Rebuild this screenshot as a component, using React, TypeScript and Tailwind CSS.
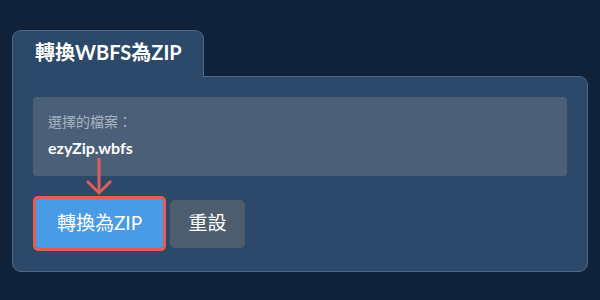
import React from "react";

export default function App() {
  return (
    <div
      className="w-[600px] h-[300px] bg-[#10213a] pt-[30px] px-[12px]"
      style={{ fontFamily: "Lato, 'Noto Sans CJK TC', sans-serif" }}
    >
      <div className="relative z-10 -mb-px w-[192px] h-[47px] bg-[#2c4969] border border-b-0 border-[#4e6b8c] rounded-t-[9px] pl-[22px] pt-[9px]">
        <span className="text-[20px] font-bold text-white leading-[24px]">轉換WBFS為ZIP</span>
      </div>
      <div className="bg-[#2c4969] border border-[#4e6b8c] rounded-[9px] rounded-tl-none px-[20px] pt-[20px] pb-[20px]">
        <div className="h-[79px] bg-[#4b5f78] rounded-[4px] pl-[15px] pt-[17px]">
          <div className="text-[14px] leading-[16px] text-[#a9b5c3]">選擇的檔案：</div>
          <div className="mt-[8px] text-[16px] leading-[20px] font-bold text-white">ezyZip.wbfs</div>
        </div>
        <div className="relative mt-[20px] flex items-center">
          <svg
            className="absolute left-[52px] top-[-38px]"
            width="28"
            height="38"
            viewBox="0 0 28 38"
            fill="none"
            stroke="#e05d58"
            strokeWidth="3"
          >
            <line x1="14" y1="0" x2="14" y2="35" />
            <polyline points="2,23 14,35 26,23" />
          </svg>
          <div className="border-[3px] border-[#e05d58] rounded-[5px]">
            <button className="h-[49px] w-[127px] bg-[#4a9be6] rounded-[2px] text-white text-[19px]">
              轉換為ZIP
            </button>
          </div>
          <button className="ml-[4px] h-[48px] w-[75px] bg-[#4d5d6e] rounded-[5px] text-white text-[19px]">
            重設
          </button>
        </div>
      </div>
    </div>
  );
}
